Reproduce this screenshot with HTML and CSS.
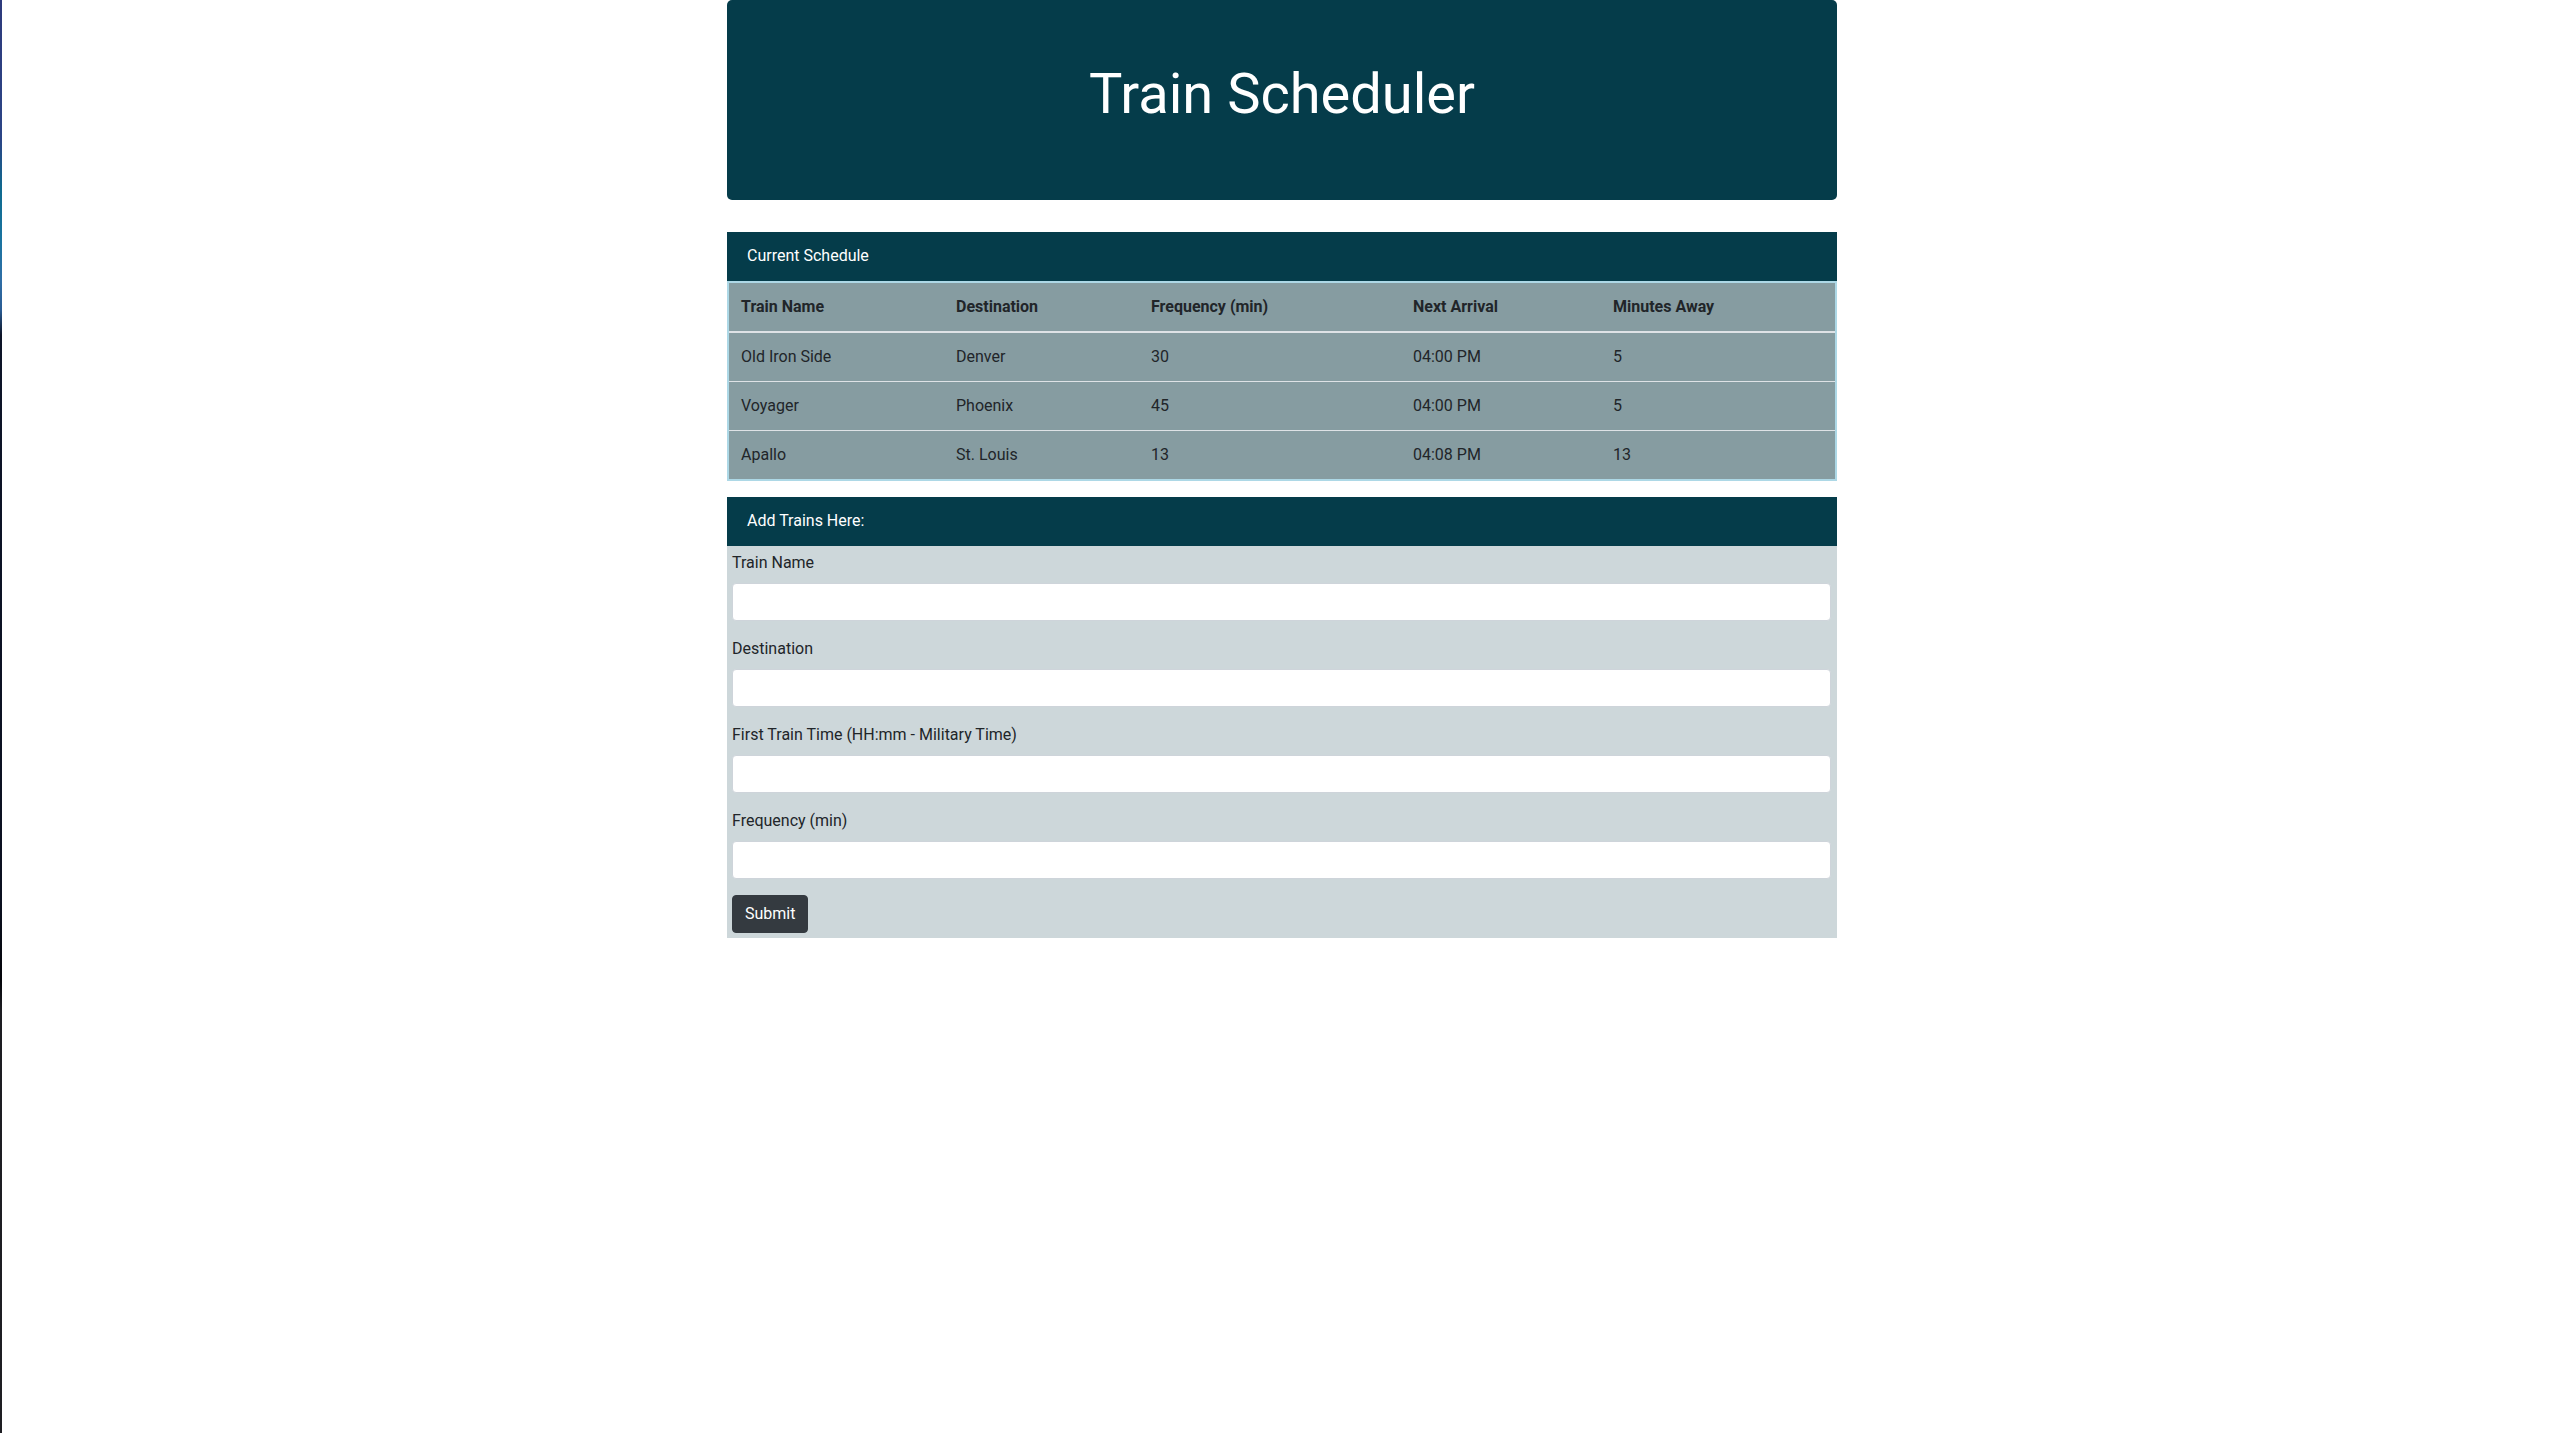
FILE: index.html
```html
<!DOCTYPE html>
<html lang="en">
<head>
<meta charset="utf-8">
<title>Train Scheduler</title>
<link rel="stylesheet" href="styles.css">
</head>
<body>
<div class="edge"></div>
<div class="container">
  <header class="jumbotron">
    <h1 class="title">Train Scheduler</h1>
  </header>

  <section class="card schedule">
    <div class="card-header">Current Schedule</div>
    <table class="table">
      <colgroup>
        <col class="c1"><col class="c2"><col class="c3"><col class="c4"><col class="c5">
      </colgroup>
      <thead>
        <tr>
          <th>Train Name</th>
          <th>Destination</th>
          <th>Frequency (min)</th>
          <th>Next Arrival</th>
          <th>Minutes Away</th>
        </tr>
      </thead>
      <tbody>
        <tr><td>Old Iron Side</td><td>Denver</td><td>30</td><td>04:00 PM</td><td>5</td></tr>
        <tr><td>Voyager</td><td>Phoenix</td><td>45</td><td>04:00 PM</td><td>5</td></tr>
        <tr><td>Apallo</td><td>St. Louis</td><td>13</td><td>04:08 PM</td><td>13</td></tr>
      </tbody>
    </table>
  </section>

  <section class="card add">
    <div class="card-header">Add Trains Here:</div>
    <form class="card-body">
      <div class="form-group">
        <label class="label" for="name">Train Name</label>
        <input class="form-control" id="name" type="text">
      </div>
      <div class="form-group">
        <label class="label" for="dest">Destination</label>
        <input class="form-control" id="dest" type="text">
      </div>
      <div class="form-group">
        <label class="label" for="first">First Train Time (HH:mm - Military Time)</label>
        <input class="form-control" id="first" type="text">
      </div>
      <div class="form-group">
        <label class="label" for="freq">Frequency (min)</label>
        <input class="form-control" id="freq" type="text">
      </div>
      <button class="btn" type="button">Submit</button>
    </form>
  </section>
</div>
</body>
</html>
```

FILE: styles.css
```css
* { box-sizing: border-box; }

html, body {
  margin: 0;
  padding: 0;
}

body {
  font-family: Roboto, "Liberation Sans", Arial, sans-serif;
  font-size: 16px;
  line-height: 1.5;
  color: #212529;
  background: #ffffff;
  min-height: 1433px;
  padding-left: 2px;
}

.edge {
  position: fixed;
  left: 0;
  top: 0;
  width: 2px;
  height: 100%;
  background: linear-gradient(to bottom,
    #2e3a7c 0px, #2b4586 140px, #0f6a8f 190px, #1a74a0 240px,
    #2f6ea6 280px, #2a5c94 310px, #0d1428 335px, #0b1020 900px,
    #04050a 980px, #1d1d22 1010px, #1e1e23 1433px);
}

.container {
  width: 1140px;
  margin: 0 auto;
  padding: 0 15px;
}

.jumbotron {
  background: #053c4a;
  border-radius: 5px;
  padding: 61px 32px 64px;
  margin-bottom: 32px;
  text-align: center;
}

.title {
  margin: 0 0 8px;
  font-size: 56px;
  font-weight: 400;
  line-height: 1.2;
  color: #ffffff;
}

.card {
  display: flex;
  flex-direction: column;
}

.schedule { margin-bottom: 16px; }

.card-header {
  background: #053c4a;
  color: #ffffff;
  padding: 12px 20px 13px;
  line-height: 24px;
}

.table {
  width: 100%;
  border-collapse: separate;
  border-spacing: 0;
  table-layout: fixed;
  background: #869ca1;
  border: 2px solid #add8e6;
}

.c1 { width: 215px; }
.c2 { width: 195px; }
.c3 { width: 262px; }
.c4 { width: 200px; }

.table th,
.table td {
  padding: 12px;
  text-align: left;
  vertical-align: top;
  line-height: 24px;
}

.table th {
  font-weight: 700;
  border-bottom: 2px solid #dee2e6;
}

.table tbody tr + tr td {
  border-top: 1px solid #dee2e6;
}

.add .card-body {
  background: #cdd7da;
  padding: 5px 6px 5px 5px;
  margin: 0;
}

.form-group { margin-bottom: 16px; }

.label {
  display: inline-block;
  margin-bottom: 8px;
  line-height: 24px;
}

.form-control {
  display: block;
  width: 100%;
  height: 38px;
  padding: 6px 12px;
  font: inherit;
  color: #495057;
  background: #ffffff;
  border: 1px solid #ced4da;
  border-radius: 4px;
}

.btn {
  display: inline-block;
  height: 38px;
  padding: 6px 12px;
  font: inherit;
  line-height: 24px;
  color: #ffffff;
  background: #343a40;
  border: 1px solid #343a40;
  border-radius: 4px;
  vertical-align: top;
}
```
